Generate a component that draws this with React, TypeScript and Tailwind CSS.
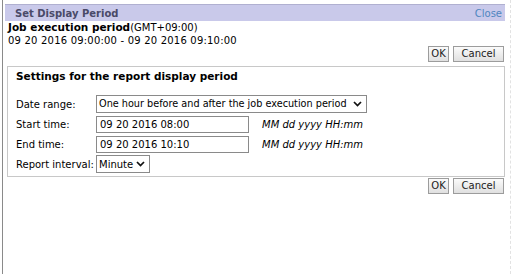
import { useState } from "react";

function Chevron() {
    return (
        <svg width="9" height="6" viewBox="0 0 9 6" className="pointer-events-none shrink-0">
            <path d="M1 1 L4.5 4.6 L8 1" stroke="#111" strokeWidth="1.7" fill="none" />
        </svg>
    );
}

export default function App() {
    const [range, setRange] = useState("around");
    const [start, setStart] = useState("09 20 2016 08:00");
    const [end, setEnd] = useState("09 20 2016 10:10");
    const [interval, setInterval] = useState("minute");

    const btn = "h-[16px] border border-[#9c9c9c] bg-gradient-to-b from-[#fbfbfb] to-[#e0e0e0] text-[#222] text-[10px] leading-none";

    return (
        <div className="w-[514px] h-[274px] bg-white font-['DejaVu_Sans',Verdana,sans-serif] text-[10px] text-black pl-[2px] flex">
            <div className="flex-1 border-l border-[#8a8a8a] pl-[2px] pr-[4px] pt-[4px]">
                <div className="h-[17px] bg-[#c9c9ea] border-t border-[#b0b0d0] flex items-center justify-between pl-[10px] pr-[3px]">
                    <span className="font-bold text-[#4a4a68]">Set Display Period</span>
                    <span className="text-[#4f86c0]">Close</span>
                </div>
                <div className="pl-[3px] leading-[13px]">
                    <div>
                        <span className="font-bold text-[10.5px]">Job execution period</span>(GMT+09:00)
                    </div>
                    <div className="tracking-[0.2px]">09 20 2016 09:00:00 - 09 20 2016 09:10:00</div>
                </div>
                <div className="flex justify-end gap-[4px] -mt-[1px] pr-[1px]">
                    <button className={`${btn} w-[21px]`}>OK</button>
                    <button className={`${btn} w-[51px]`}>Cancel</button>
                </div>
                <div className="ml-[2px] mt-[4px] border border-[#c8c8c8] pl-[8px] pt-[3px] pb-[3px]">
                    <div className="font-bold text-[10.5px] leading-[13px]">Settings for the report display period</div>
                    <div className="mt-[12px] flex flex-col gap-[2px]">
                        <div className="flex items-center h-[18px]">
                            <span className="w-[80px] shrink-0 whitespace-nowrap">Date range:</span>
                            <div className="relative h-[18px] w-[271px] border border-[#8a8a8a] flex items-center justify-between pl-[2px] pr-[4px]">
                                <span className="whitespace-nowrap text-[9.7px]">One hour before and after the job execution period</span>
                                <Chevron />
                                <select
                                    value={range}
                                    onChange={(e) => setRange(e.target.value)}
                                    className="absolute inset-0 opacity-0"
                                >
                                    <option value="around">One hour before and after the job execution period</option>
                                </select>
                            </div>
                        </div>
                        <div className="flex items-center h-[18px]">
                            <span className="w-[80px] shrink-0 whitespace-nowrap">Start time:</span>
                            <input
                                value={start}
                                onChange={(e) => setStart(e.target.value)}
                                className="h-[17px] w-[153px] border border-[#8a8a8a] px-[3px] text-[10px] outline-none"
                            />
                            <span className="ml-[13px] italic">MM dd yyyy HH:mm</span>
                        </div>
                        <div className="flex items-center h-[18px]">
                            <span className="w-[80px] shrink-0 whitespace-nowrap">End time:</span>
                            <input
                                value={end}
                                onChange={(e) => setEnd(e.target.value)}
                                className="h-[17px] w-[153px] border border-[#8a8a8a] px-[3px] text-[10px] outline-none"
                            />
                            <span className="ml-[13px] italic">MM dd yyyy HH:mm</span>
                        </div>
                        <div className="flex items-center h-[18px]">
                            <span className="w-[80px] shrink-0 whitespace-nowrap">Report interval:</span>
                            <div className="relative h-[18px] w-[54px] border border-[#8a8a8a] flex items-center justify-between pl-[2px] pr-[4px]">
                                <span>Minute</span>
                                <Chevron />
                                <select
                                    value={interval}
                                    onChange={(e) => setInterval(e.target.value)}
                                    className="absolute inset-0 opacity-0"
                                >
                                    <option value="minute">Minute</option>
                                </select>
                            </div>
                        </div>
                    </div>
                </div>
                <div className="flex justify-end gap-[4px] mt-[1px] pr-[1px]">
                    <button className={`${btn} w-[21px]`}>OK</button>
                    <button className={`${btn} w-[51px]`}>Cancel</button>
                </div>
            </div>
            <div className="w-[4px] border-l border-dashed border-[#e2e2e2] ml-[1px]" />
        </div>
    );
}
